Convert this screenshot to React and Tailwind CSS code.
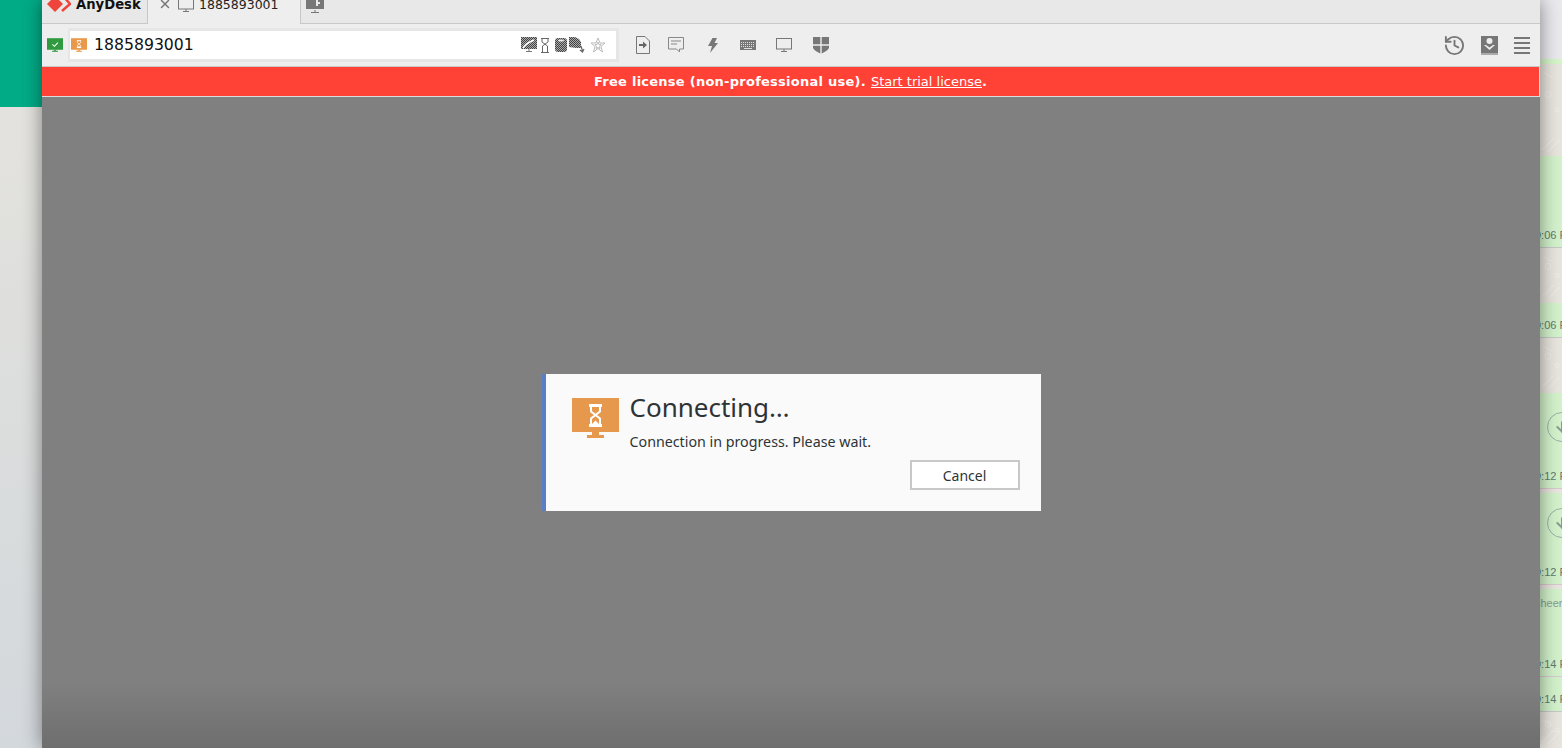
import React from "react";
import { ArrowDown, History, X } from "lucide-react";

const dejavu = "font-['DejaVu_Sans',sans-serif]";

// monitor with a solid screen, the glyph inside is passed as children
const SolidMonitor = ({ fill, className, children }) => (
  <svg viewBox="0 0 47 40" className={className}>
    <rect x="0" y="0" width="47" height="34" fill={fill} />
    <rect x="20" y="34" width="7" height="3" fill={fill} />
    <rect x="15" y="37" width="17" height="3" fill={fill} />
    {children}
  </svg>
);

const Hourglass = () => (
  <g>
    <rect x="17" y="6" width="13" height="3" fill="#fff" />
    <rect x="17" y="26" width="13" height="3" fill="#fff" />
    <path
      d="M19 9v4.500l4.500 3.500-4.500 3.500V26M28 9v4.500L23.500 17l4.500 3.500V26"
      fill="none"
      stroke="#fff"
      strokeWidth="2"
    />
    <path d="M20 26l3.500-3.500L27 26z" fill="#fff" />
  </g>
);

const OutlineMonitor = ({ className }) => (
  <svg viewBox="0 0 16 14" className={className} fill="none" stroke="#777" strokeWidth="1">
    <rect x="0.500" y="0.500" width="15" height="10.500" />
    <path d="M8 11v2M5 13.500h6" />
  </svg>
);

// the four dithered feature icons inside the address field
const DitherDefs = () => (
  <defs>
    <pattern id="dither" width="2" height="2" patternUnits="userSpaceOnUse">
      <rect width="2" height="2" fill="#aaa" />
      <rect width="1" height="1" fill="#444" />
      <rect x="1" y="1" width="1" height="1" fill="#444" />
    </pattern>
  </defs>
);

const AddressIcons = () => (
  <div className="flex items-center">
    <svg width="16" height="16" viewBox="0 0 16 16">
      <DitherDefs />
      <rect y="0" width="16" height="12" fill="url(#dither)" />
      <path d="M2 11C5 6 9 5 13 3" fill="none" stroke="#fff" strokeWidth="1.500" />
      <path d="M8 12v2M5 14.500h6" stroke="#777" strokeWidth="1" />
    </svg>
    <svg width="8" height="15" viewBox="0 0 8 15" className="ml-[4px]" fill="none" stroke="#666" strokeWidth="1">
      <path d="M0 .5h8M0 14.500h8M1 1v3l5.500 4v6M7 1v3L1.500 8v6" />
    </svg>
    <svg width="12" height="14" viewBox="0 0 12 14" className="ml-[6px]">
      <rect width="12" height="14" rx="3" fill="url(#dither)" />
      <ellipse cx="6" cy="2.500" rx="3" ry="1" fill="#eee" />
    </svg>
    <svg width="16" height="16" viewBox="0 0 16 16" className="ml-[2px]">
      <path d="M0 0h6l4 2 2 3v6H7l-7-1z" fill="url(#dither)" />
      <path d="M12 9l1.500 5M11 13l2.500 2 1.500-3" fill="none" stroke="#666" strokeWidth="1.200" />
    </svg>
    <svg width="16" height="16" viewBox="0 0 16 16" className="ml-[5px]" fill="none" stroke="#bbb" strokeWidth="1">
      <path d="M8 1l2 5h5l-4 3.500L12.500 15 8 11.500 3.500 15 5 9.500 1 6h5z" />
      <path d="M8 5l1 2.500h2L9.500 9.500l.5 2L8 10.500l-2 1 .5-2L5 7.500h2z" />
    </svg>
  </div>
);

const ToolbarIcons = () => (
  <div className="flex items-center ml-[17px]">
    {/* file transfer */}
    <svg width="14" height="18" viewBox="0 0 14 18" fill="none" stroke="#777">
      <path d="M.5.5h8.500l4.500 4.500v12.500H.5z" />
      <path d="M3 8h4V5.500L11 9l-4 3.500V10H3z" fill="#666" stroke="none" />
    </svg>
    {/* chat */}
    <svg width="16" height="17" viewBox="0 0 16 17" className="ml-[18px]" fill="none" stroke="#888">
      <path d="M.5.500h15v11.500h-4v3l-3-3H.5z" />
      <path d="M3 4h10M3 7h6" />
    </svg>
    {/* action */}
    <svg width="10" height="15" viewBox="0 0 10 15" className="ml-[24px]" fill="#777">
      <path d="M4.500 0H9L6.500 5H10L2 15l2-7H0z" />
    </svg>
    {/* keyboard */}
    <svg width="16" height="10" viewBox="0 0 16 10" className="ml-[22px]">
      <rect width="16" height="10" fill="#777" />
      <path d="M1 2.500h14M1 4.500h14M1 6.500h14" stroke="#ddd" strokeDasharray="1 1" />
      <path d="M4 8.500h8" stroke="#ddd" />
    </svg>
    <OutlineMonitor className="w-4 h-[14px] ml-[20px]" />
    {/* permissions */}
    <svg width="16" height="17" viewBox="0 0 16 17" className="ml-[21px]" fill="#777">
      <path d="M0 0h7.300v7.300H0zM8.700 0H16v7.300H8.700zM0 8.700h7.300V16.500C4 15 1 13 0 11zM8.700 8.700H16V11c-1 2-4 4-7.300 5.500z" />
    </svg>
  </div>
);

const RightIcons = () => (
  <div className="ml-auto flex items-center pr-[10px]">
    <History size={23} color="#777" strokeWidth={2} />
    {/* address book with a download arrow */}
    <svg width="17" height="19" viewBox="0 0 17 19" className="ml-[15px]">
      <rect width="17" height="19" fill="#777" />
      <rect y="17" width="17" height="2" fill="#aaa" />
      <circle cx="8.500" cy="5" r="3" fill="#eee" />
      <path d="M3 9l5.500 5L14 9l-2 0-3.500 2.500L5 9z" fill="#eee" />
    </svg>
    <div className="ml-[16px] flex flex-col gap-[3px]">
      <div className="w-4 h-[2px] bg-[#777]" />
      <div className="w-4 h-[2px] bg-[#777]" />
      <div className="w-4 h-[2px] bg-[#777]" />
      <div className="w-4 h-[2px] bg-[#777]" />
    </div>
  </div>
);

const TitleBar = () => (
  <div className={`flex h-6 shrink-0 bg-[#e8e8e8] overflow-hidden ${dejavu}`}>
    <div className="w-[105px] h-6 border-b border-[#c8c8c8] flex items-start pl-[5px]">
      <svg width="24" height="12" viewBox="0 0 24 12" className="shrink-0">
        <path d="M0 4l8-8 8 8-8 8z" fill="#ef443b" />
        <path d="M17 -3l6 7-8 7" fill="none" stroke="#ef443b" strokeWidth="2.500" />
      </svg>
      <span className="ml-[5px] text-[13.200px] leading-[10px] font-bold text-[#111]">AnyDesk</span>
    </div>
    <div className="w-[154px] h-6 bg-[#eeeeee] border-x border-[#c8c8c8] flex items-start pl-[10px]">
      <X size={14} color="#777" strokeWidth={2.500} className="-mt-[3px] shrink-0" />
      <OutlineMonitor className="w-4 h-[14px] -mt-[2px] ml-[6px] shrink-0" />
      <span className="ml-[5px] text-[12.500px] leading-[10px] text-[#222]">1885893001</span>
    </div>
    <div className="flex-1 h-6 border-b border-[#c8c8c8] pl-[5px]">
      <svg width="18" height="13" viewBox="0 0 18 13">
        <rect width="18" height="9" fill="#777" />
        <path d="M8 11h2M5 12.500h8" stroke="#777" />
        <path d="M10 0h2v2h2v2h-2v2h-2z" fill="#e8e8e8" />
      </svg>
    </div>
  </div>
);

const Toolbar = () => (
  <div className="flex items-center h-[43px] shrink-0 bg-[#eeeeee] border-b border-[#c8c8c8] pl-[5px]">
    <SolidMonitor fill="#2f9a3f" className="w-4 h-[14px] shrink-0">
      <path d="M16 18l6 6 10-11" fill="none" stroke="#fff" strokeWidth="3" />
    </SolidMonitor>
    <div className="ml-[5px] w-[551px] h-[34px] shrink-0 border-[3px] border-[#e6e6e6] border-l-2 bg-white flex items-center pr-[10px]">
      <SolidMonitor fill="#e9994a" className="w-4 h-[14px] ml-[1px] shrink-0">
        <Hourglass />
      </SolidMonitor>
      <span className={`ml-[7px] text-[15.700px] text-[#111] ${dejavu}`}>1885893001</span>
      <div className="ml-auto">
        <AddressIcons />
      </div>
    </div>
    <ToolbarIcons />
    <RightIcons />
  </div>
);

const ConnectingDialog = () => (
  <div className="w-[499px] h-[137px] bg-[#fafafa] border-l-4 border-[#5a7fc8] pl-[26px] pr-[21px] pt-[24px] font-['Noto_Sans',sans-serif]">
    <div className="flex">
      <SolidMonitor fill="#e6984c" className="w-[47px] h-10 shrink-0">
        <Hourglass />
      </SolidMonitor>
      <div className="ml-[11px] -mt-[2px]">
        <div className="text-[26px] leading-[22px] text-[#2e3436]">Connecting…</div>
        <div className="mt-[14px] text-[14.250px] leading-[20px] text-[#2e3436]">Connection in progress. Please wait.</div>
      </div>
    </div>
    <div className="flex justify-end mt-[8px]">
      <button className="w-[110px] h-[30px] bg-white border-2 border-[#c8c8c8] text-[14px] text-[#2e3436]">Cancel</button>
    </div>
  </div>
);

// faint wallpaper doodles of the chat background
const Doodle = ({ h }) => (
  <div className="overflow-hidden" style={{ height: h }}>
    <svg width="22" height={h} viewBox={`0 0 22 ${h}`} fill="none" stroke="#f1eeea" strokeWidth="1">
      <circle cx="8" cy={h / 3} r="3" />
      <circle cx="17" cy={h / 2} r="2" />
      <path d={`M2 ${h - 6}L14 ${h - 18}M8 ${h - 4}L20 ${h - 16}M3 8l10 6`} />
    </svg>
  </div>
);

const TimeRow = ({ h, time, border = "border-[#c8c8c8]", children }) => (
  <div className={`flex flex-col justify-end overflow-hidden bg-[#d3f2cb] border-b ${border}`} style={{ height: h }}>
    {children}
    <div className="mb-[5px] -ml-[5px] whitespace-nowrap text-[11px] leading-[13px] text-[#5f7a70] font-['Liberation_Sans',sans-serif]">
      {time}
    </div>
  </div>
);

const DownloadCircle = () => (
  <div className="mb-[28px] ml-[7px] w-[30px] h-[30px] shrink-0 rounded-full border border-[#9bb0a5] flex items-center justify-center">
    <ArrowDown size={16} color="#8a9a92" strokeWidth={3} className="shrink-0" />
  </div>
);

// sliver of the chat window that shows beside the AnyDesk window
const ChatSliver = () => (
  <div className="w-[22px] shrink-0 h-[748px] overflow-hidden flex flex-col bg-[#e8e4de]">
    <div className="h-[59px] bg-[#e9e9ee]" />
    <div className="h-[5px] bg-[#d5f5c8]" />
    <Doodle h={92} />
    <TimeRow h={92} time="9:06 PM" />
    <Doodle h={55} />
    <TimeRow h={35} time="9:06 PM" />
    <Doodle h={55} />
    <TimeRow h={96} time="9:12 PM" border="border-[#d9c8d0]">
      <DownloadCircle />
    </TimeRow>
    <div className="h-[4px]" />
    <TimeRow h={92} time="9:12 PM" border="border-[#d9c8d0]">
      <DownloadCircle />
    </TimeRow>
    <div className="h-[4px]" />
    <TimeRow h={88} time="9:14 PM" border="border-[#d9c8d0]">
      <div className="mb-[47px] -ml-[5px] whitespace-nowrap text-[11px] leading-[16px] text-[#8a9a8e] font-['Liberation_Sans',sans-serif]">
        cheers
      </div>
    </TimeRow>
    <TimeRow h={35} time="9:14 PM" />
    <Doodle h={36} />
  </div>
);

const App = () => (
  <div className="flex w-[1562px] h-[748px] overflow-hidden bg-white">
    {/* page behind the window on the left */}
    <div className="w-[42px] shrink-0 flex flex-col bg-[linear-gradient(180deg,#e6e4de,#d3d8dc)]">
      <div className="h-[107px] bg-[#00ab86]" />
    </div>

    {/* AnyDesk window */}
    <div className="relative z-10 w-[1498px] shrink-0 flex flex-col shadow-[0_0_18px_rgba(0,0,0,0.45)]">
      <TitleBar />
      <Toolbar />
      <div className={`h-[30px] shrink-0 bg-[#ff4136] border-b border-r border-[#dddddd] flex items-center justify-center text-[13px] text-white ${dejavu}`}>
        <span className="font-bold tracking-[0.25px]">Free license (non-professional use).</span>
        <span className="ml-[5px] underline">Start trial license</span>
        <span className="font-bold">.</span>
      </div>
      <div className="flex-1 flex justify-center pt-[277px] bg-[linear-gradient(180deg,#808080_0%,#808080_90%,#6e6e6e_100%)]">
        <ConnectingDialog />
      </div>
    </div>

    <ChatSliver />
  </div>
);

export default App;
